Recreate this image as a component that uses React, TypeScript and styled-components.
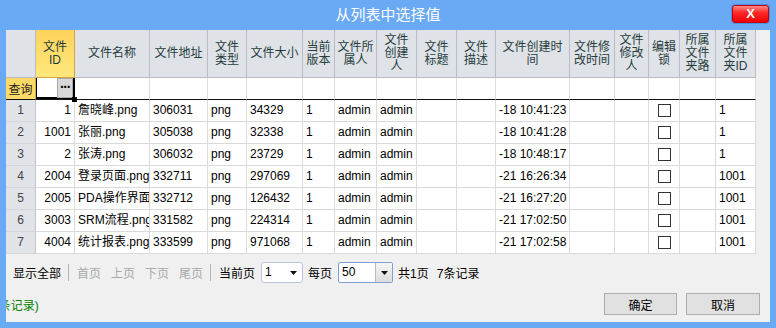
import styled, { createGlobalStyle, css } from "styled-components";

const COLS = [
  { title: "", width: 30 },
  { title: "文件ID", width: 39, align: "right" },
  { title: "文件名称", width: 75 },
  { title: "文件地址", width: 58 },
  { title: "文件类型", width: 39 },
  { title: "文件大小", width: 56 },
  { title: "当前版本", width: 32 },
  { title: "文件所属人", width: 42 },
  { title: "文件创建人", width: 40 },
  { title: "文件标题", width: 40 },
  { title: "文件描述", width: 39 },
  { title: "文件创建时间", width: 74 },
  { title: "文件修改时间", width: 45 },
  { title: "文件修改人", width: 34 },
  { title: "编辑锁", width: 31, check: true },
  { title: "所属文件夹路", width: 36 },
  { title: "所属文件夹ID", width: 40 },
];

const ROWS = [
  ["1", "詹晓峰.png", "306031", "png", "34329", "1", "admin", "admin", "", "", "-18 10:41:23", "", "", "", "", "1"],
  ["1001", "张丽.png", "305038", "png", "32338", "1", "admin", "admin", "", "", "-18 10:41:28", "", "", "", "", "1"],
  ["2", "张涛.png", "306032", "png", "23729", "1", "admin", "admin", "", "", "-18 10:48:17", "", "", "", "", "1"],
  ["2004", "登录页面.png", "332711", "png", "297069", "1", "admin", "admin", "", "", "-21 16:26:34", "", "", "", "", "1001"],
  ["2005", "PDA操作界面.png", "332712", "png", "126432", "1", "admin", "admin", "", "", "-21 16:27:20", "", "", "", "", "1001"],
  ["3003", "SRM流程.png", "331582", "png", "224314", "1", "admin", "admin", "", "", "-21 17:02:50", "", "", "", "", "1001"],
  ["4004", "统计报表.png", "333599", "png", "971068", "1", "admin", "admin", "", "", "-21 17:02:58", "", "", "", "", "1001"],
];

const colTemplate = COLS.map((c) => `${c.width}px`).join(" ");

const GlobalStyle = createGlobalStyle`
  html, body {
    margin: 0;
    padding: 0;
    background: #6aa9f3;
  }
  body {
    font-family: "Liberation Sans", "Noto Sans CJK SC", sans-serif;
    font-size: 12px;
  }
`;

const Window = styled.div`
  width: 776px;
  height: 328px;
  background: #6aa9f3;
  display: flex;
  flex-direction: column;
`;

const TitleBar = styled.div`
  height: 30px;
  flex: none;
  display: grid;
  grid-template-columns: 1fr auto 1fr;
  align-items: center;
`;

const Title = styled.div`
  grid-column: 2;
  color: #fff;
  font-size: 15px;
  line-height: 30px;
`;

const CloseButton = styled.button`
  justify-self: end;
  align-self: start;
  margin: 5px 7px 0 0;
  width: 37px;
  height: 18px;
  padding: 0;
  border: 1px solid #c40000;
  border-radius: 3px;
  box-shadow: 0 0 0 1px #4d8fe6;
  background: linear-gradient(#ff8a8a, #ff2a2a 40%, #f00000);
  color: #fff;
  font-family: "Liberation Sans", sans-serif;
  font-weight: bold;
  font-size: 13px;
  line-height: 16px;
`;

const Body = styled.div`
  flex: 1;
  margin: 0 6px 6px;
  background: #f0f0f0;
  display: flex;
  flex-direction: column;
  overflow: hidden;
`;

const Grid = styled.div`
  width: 750px;
  display: flex;
  flex-direction: column;
  flex: none;
`;

const GridRow = styled.div<{ $height: number }>`
  display: grid;
  grid-template-columns: ${colTemplate};
  height: ${(p) => p.$height}px;
`;

const HeaderCell = styled.div<{ $active?: boolean }>`
  box-sizing: border-box;
  display: flex;
  align-items: center;
  justify-content: center;
  text-align: center;
  padding: 0 2px;
  line-height: 13px;
  color: #263c3c;
  background: #dfe2e7;
  border-right: 1px solid #b9bdc3;
  border-bottom: 1px solid #b9bdc3;
  overflow: hidden;
  ${(p) =>
    p.$active &&
    css`
      background: linear-gradient(#fdd35c, #ffe77c);
      border-right-color: #d6a444;
      border-bottom-color: #d6a444;
    `}
`;

const FilterCell = styled.div<{ $label?: boolean; $selected?: boolean }>`
  box-sizing: border-box;
  position: relative;
  display: flex;
  align-items: center;
  background: #fff;
  border-right: 1px solid #dcdcdc;
  border-bottom: 1px solid #111;
  ${(p) =>
    p.$label &&
    css`
      justify-content: center;
      background: #fdd967;
      border-right-color: #cfa84e;
      color: #1d1d1d;
    `}
  ${(p) =>
    p.$selected &&
    css`
      justify-content: flex-end;
      align-items: flex-start;
      padding-right: 1px;
      border-right: none;
      box-shadow: inset 1px 0 0 #000, inset -2px 0 0 #000, inset 0 -2px 0 #000;
    `}
`;

const EllipsisButton = styled.div`
  box-sizing: border-box;
  width: 16px;
  height: 20px;
  margin-right: 1px;
  background: #d8d8d8;
  border: 1px solid #a8a8a8;
  font-weight: bold;
  font-size: 14px;
  line-height: 9px;
  text-align: center;
  letter-spacing: -0.5px;
  color: #000;
`;

const FillHandle = styled.span`
  position: absolute;
  right: -2px;
  bottom: -3px;
  width: 5px;
  height: 5px;
  background: #000;
  z-index: 1;
`;

const RowHead = styled.div`
  box-sizing: border-box;
  background: #e0e3e8;
  color: #444;
  text-align: center;
  line-height: 21px;
  border-right: 1px solid #c3c7cd;
  border-bottom: 1px solid #d2d4d8;
`;

const DataCell = styled.div<{ $align?: string; $check?: boolean }>`
  box-sizing: border-box;
  background: #fff;
  color: #000;
  border-right: 1px solid #dadada;
  border-bottom: 1px solid #dadada;
  padding: 0 3px;
  line-height: 21px;
  white-space: nowrap;
  overflow: hidden;
  text-align: ${(p) => p.$align || "left"};
  ${(p) =>
    p.$check &&
    css`
      display: flex;
      align-items: center;
      justify-content: center;
      padding: 0;
    `}
`;

const CheckBox = styled.span`
  box-sizing: border-box;
  width: 13px;
  height: 13px;
  border: 1px solid #333;
  background: #fff;
`;

const Footer = styled.div`
  flex: 1;
  display: flex;
  flex-direction: column;
  gap: 10px;
  padding: 8px 10px 7px 7px;
`;

const Pager = styled.div`
  display: flex;
  align-items: center;
  height: 21px;
  color: #000;
  white-space: nowrap;
`;

const Sep = styled.span`
  width: 1px;
  height: 17px;
  background: #b4b4b4;
  margin: 0 8px 0 7px;
`;

const NavGroup = styled.div`
  display: flex;
  gap: 10px;
`;

const NavLink = styled.span<{ $disabled?: boolean }>`
  color: ${(p) => (p.$disabled ? "#a8a8a8" : "#000")};
`;

const Label = styled.span<{ $left?: number; $right?: number }>`
  margin-left: ${(p) => p.$left || 0}px;
  margin-right: ${(p) => p.$right || 0}px;
`;

const Select = styled.div<{ $width: number; $strong?: boolean }>`
  box-sizing: border-box;
  width: ${(p) => p.$width}px;
  height: 21px;
  display: flex;
  align-items: stretch;
  background: #fff;
  border: 1px solid ${(p) => (p.$strong ? "#7e9fd3" : "#bac6d8")};
  border-radius: ${(p) => (p.$strong ? 2 : 3)}px;
  overflow: hidden;
`;

const SelectValue = styled.span`
  flex: 1;
  padding-left: 3px;
  line-height: 19px;
`;

const SelectArrow = styled.span<{ $button?: boolean }>`
  width: ${(p) => (p.$button ? 16 : 18)}px;
  display: flex;
  align-items: center;
  justify-content: center;
  ${(p) =>
    p.$button &&
    css`
      background: linear-gradient(#f6f6f6, #dcdcdc);
      border-left: 1px solid #b3bccb;
    `}
`;

const BottomRow = styled.div`
  display: flex;
  align-items: center;
  justify-content: space-between;
  height: 22px;
`;

const Note = styled.span`
  margin-left: -37px;
  color: #008000;
  white-space: nowrap;
`;

const Buttons = styled.div`
  display: flex;
  gap: 9px;
`;

const Button = styled.button<{ $width: number }>`
  width: ${(p) => p.$width}px;
  height: 22px;
  padding: 0;
  background: #e1e1e1;
  border: 1px solid #adadad;
  font-family: "Liberation Sans", "Noto Sans CJK SC", sans-serif;
  font-size: 12px;
  color: #000;
`;

const Arrow = () => (
  <svg width="7" height="4" viewBox="0 0 7 4">
    <path d="M0 0h7L3.5 4z" fill="#111" />
  </svg>
);

export default function App() {
  return (
    <Window>
      <GlobalStyle />
      <TitleBar>
        <Title>从列表中选择值</Title>
        <CloseButton>X</CloseButton>
      </TitleBar>
      <Body>
        <Grid>
          <GridRow $height={48}>
            {COLS.map((c, i) => (
              <HeaderCell key={i} $active={i === 1}>
                {c.title}
              </HeaderCell>
            ))}
          </GridRow>
          <GridRow $height={22}>
            {COLS.map((c, i) =>
              i === 0 ? (
                <FilterCell key={i} $label>
                  查询
                </FilterCell>
              ) : i === 1 ? (
                <FilterCell key={i} $selected>
                  <EllipsisButton>...</EllipsisButton>
                  <FillHandle />
                </FilterCell>
              ) : (
                <FilterCell key={i} />
              )
            )}
          </GridRow>
          {ROWS.map((row, r) => (
            <GridRow key={r} $height={22}>
              <RowHead>{r + 1}</RowHead>
              {row.map((v, i) => {
                const col = COLS[i + 1];
                return col.check ? (
                  <DataCell key={i} $check>
                    <CheckBox />
                  </DataCell>
                ) : (
                  <DataCell key={i} $align={col.align}>
                    {v}
                  </DataCell>
                );
              })}
            </GridRow>
          ))}
        </Grid>
        <Footer>
          <Pager>
            <NavLink>显示全部</NavLink>
            <Sep />
            <NavGroup>
              <NavLink $disabled>首页</NavLink>
              <NavLink $disabled>上页</NavLink>
              <NavLink $disabled>下页</NavLink>
              <NavLink $disabled>尾页</NavLink>
            </NavGroup>
            <Sep />
            <Label $right={6}>当前页</Label>
            <Select $width={42}>
              <SelectValue>1</SelectValue>
              <SelectArrow>
                <Arrow />
              </SelectArrow>
            </Select>
            <Label $left={5} $right={6}>
              每页
            </Label>
            <Select $width={55} $strong>
              <SelectValue>50</SelectValue>
              <SelectArrow $button>
                <Arrow />
              </SelectArrow>
            </Select>
            <Label $left={5}>共1页</Label>
            <Label $left={8}>7条记录</Label>
          </Pager>
          <BottomRow>
            <Note>(共7条记录)</Note>
            <Buttons>
              <Button $width={73}>确定</Button>
              <Button $width={74}>取消</Button>
            </Buttons>
          </BottomRow>
        </Footer>
      </Body>
    </Window>
  );
}
